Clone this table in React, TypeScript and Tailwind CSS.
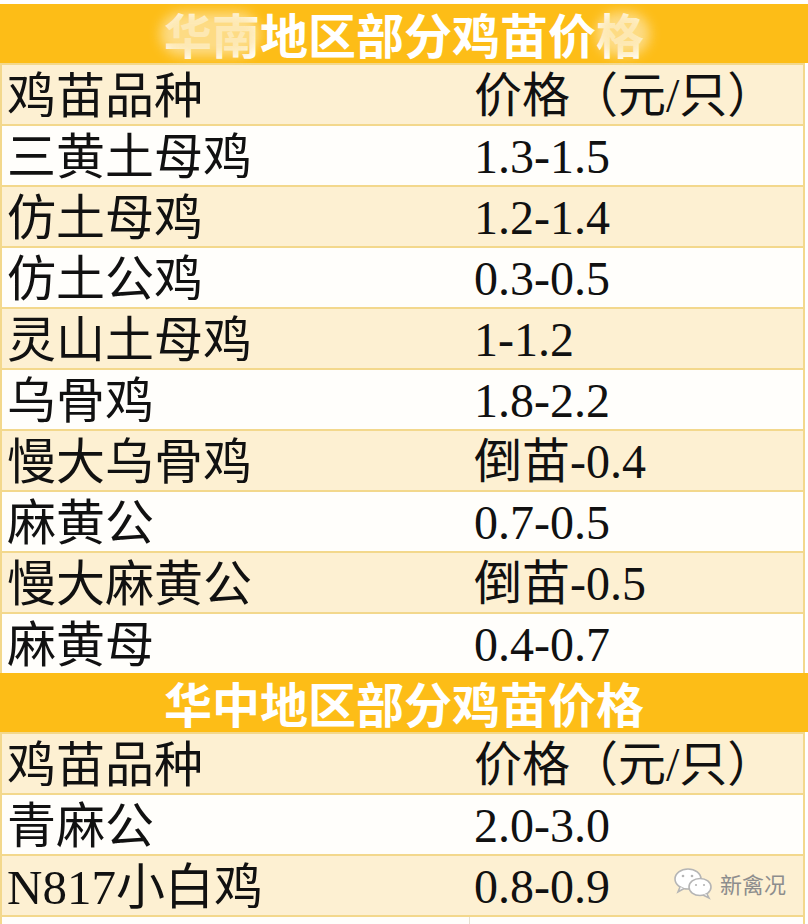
const FONT = { fontFamily: '"Liberation Serif", "Noto Sans CJK SC", serif' }
const TITLE_FONT = { fontFamily: '"Noto Sans CJK SC", sans-serif' }

type Row = [string, string]

const southRows: Row[] = [
  ["三黄土母鸡", "1.3-1.5"],
  ["仿土母鸡", "1.2-1.4"],
  ["仿土公鸡", "0.3-0.5"],
  ["灵山土母鸡", "1-1.2"],
  ["乌骨鸡", "1.8-2.2"],
  ["慢大乌骨鸡", "倒苗-0.4"],
  ["麻黄公", "0.7-0.5"],
  ["慢大麻黄公", "倒苗-0.5"],
  ["麻黄母", "0.4-0.7"],
]

const centralRows: Row[] = [
  ["青麻公", "2.0-3.0"],
  ["N817小白鸡", "0.8-0.9"],
]

function Title({ text, smudged }: { text: string; smudged?: boolean }) {
  return (
    <div
      className="flex h-[59px] items-center justify-center bg-[#fdbd17] text-[48px] font-semibold leading-[59px] text-white"
      style={TITLE_FONT}
    >
      <span className="relative">
        {text}
        {smudged && (
          <>
            {/* soft watermark smudges, as in the source image */}
            <span className="absolute left-[-4px] top-[8px] h-[44px] w-[100px] rounded-full bg-[#fde3a0] opacity-80 blur-[6px]" />
            <span className="absolute right-[-6px] top-[8px] h-[44px] w-[54px] rounded-full bg-[#fde3a0] opacity-80 blur-[6px]" />
          </>
        )}
      </span>
    </div>
  )
}

function DataRow({ name, price, shade }: { name: string; price: string; shade: boolean }) {
  return (
    <div
      className={`mr-[3px] flex h-[61px] items-center border-x-2 border-t-2 border-[#f3d88c] text-[48px] leading-none text-[#111] ${
        shade ? "bg-[#fdf0d2]" : "bg-[#fffefb]"
      }`}
      style={FONT}
    >
      <div className="w-[472px] pl-[5px] pt-[3px] text-[49px]">{name}</div>
      <div className="flex-1 pt-[3px]">{price}</div>
    </div>
  )
}

function WeChatMark() {
  return (
    <svg width="44" height="34" viewBox="0 0 44 34" fill="none" stroke="#b5b5b5" strokeWidth="1.6">
      <ellipse cx="16" cy="13" rx="13" ry="10" fill="#fff" />
      <path d="M8 21 L6 26 L12 22.5" fill="#fff" />
      <ellipse cx="28" cy="21" rx="11" ry="8.5" fill="#fff" />
      <path d="M35 28 L37 32 L31 29" fill="#fff" />
      <circle cx="11" cy="10" r="1.3" fill="#b5b5b5" stroke="none" />
      <circle cx="20" cy="10" r="1.3" fill="#b5b5b5" stroke="none" />
      <circle cx="24" cy="19" r="1.1" fill="#b5b5b5" stroke="none" />
      <circle cx="32" cy="19" r="1.1" fill="#b5b5b5" stroke="none" />
    </svg>
  )
}

export default function App() {
  return (
    <div className="h-[924px] w-[808px] overflow-hidden bg-white pt-[4px]">
      <Title text="华南地区部分鸡苗价格" smudged />
      <DataRow name="鸡苗品种" price="价格（元/只）" shade />
      {southRows.map(([n, p], i) => (
        <DataRow key={n} name={n} price={p} shade={i % 2 === 1} />
      ))}
      <Title text="华中地区部分鸡苗价格" />
      <DataRow name="鸡苗品种" price="价格（元/只）" shade />
      {centralRows.map(([n, p], i) => (
        <div key={n} className="relative">
          <DataRow name={n} price={p} shade={i % 2 === 1} />
          {i === 1 && (
            <div className="absolute right-[22px] top-[12px] flex items-center gap-[4px]">
              <WeChatMark />
              <span
                className="text-[22px] leading-none text-[#8d8d8d]"
                style={{ fontFamily: '"Noto Sans CJK SC", sans-serif' }}
              >
                新禽况
              </span>
            </div>
          )}
        </div>
      ))}
      <div className="mr-[3px] flex h-[12px] border-x-2 border-t-2 border-[#f3d88c] bg-[#fffefb]">
        <div className="w-[468px] border-r border-[#e6e0d0]" />
      </div>
    </div>
  )
}
